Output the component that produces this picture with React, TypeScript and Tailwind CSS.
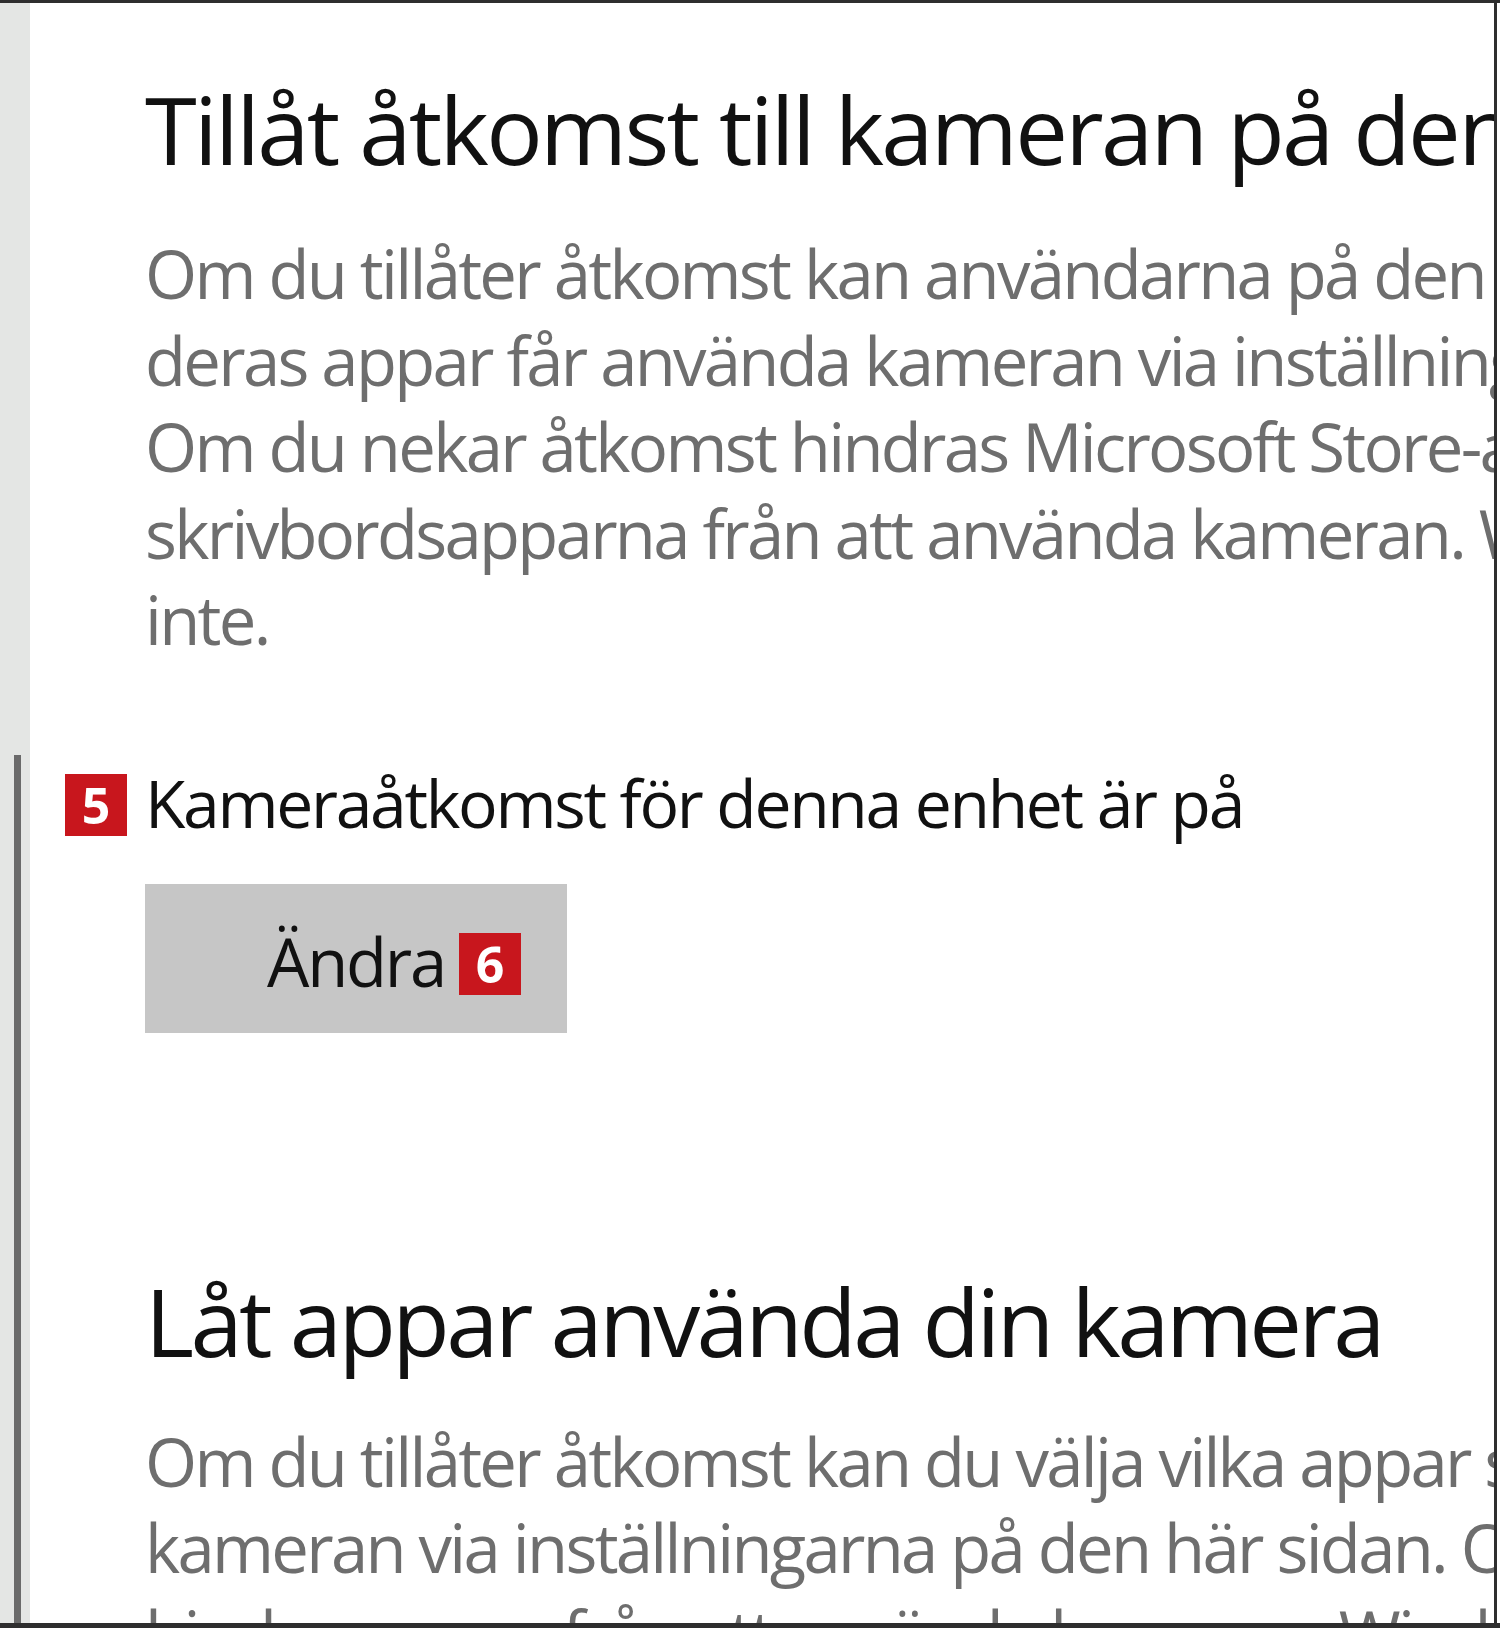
import React from 'react';

const font = { fontFamily: '"Open Sans", "Noto Sans", sans-serif' };

const Badge = ({ n, className }: { n: string; className: string }) => (
  <span
    className={`absolute w-[62px] h-[62px] bg-[#c8161d] text-white text-[50px] font-bold leading-[62px] text-center tracking-normal ${className}`}
  >
    {n}
  </span>
);

const Paragraph = ({ lines, className }: { lines: string[]; className?: string }) => (
  <div className={`text-[67px] leading-[86.5px] tracking-[-2.7px] text-[#6e6e6e] ${className ?? ''}`}>
    {lines.map((line, i) => (
      <div key={i} className="whitespace-nowrap">
        {line}
      </div>
    ))}
  </div>
);

const App = () => {
  return (
    <div
      className="w-[1500px] h-[1628px] bg-white border-t-[3px] border-b-[5px] border-[#2e2e2e] flex overflow-hidden"
      style={font}
    >
      {/* left strip with scrollbar */}
      <div className="w-[30px] shrink-0 bg-[#e4e6e4] pt-[752px] pl-[14px]">
        <div className="w-[7px] h-full bg-[#6a6a6a]" />
      </div>

      <main className="flex-1 min-w-0 border-r-[3px] border-[#2e2e2e] overflow-hidden pl-[115px]">
        <h1 className="mt-[70px] text-[94px] leading-[113px] tracking-[-2.7px] text-[#111] whitespace-nowrap font-normal">
          Tillåt åtkomst till kameran på den här enheten
        </h1>
        <Paragraph
          className="mt-[44px]"
          lines={[
            'Om du tillåter åtkomst kan användarna på den här enheten välja om',
            'deras appar får använda kameran via inställningarna på den här sidan.',
            'Om du nekar åtkomst hindras Microsoft Store-apparna och de flesta',
            'skrivbordsapparna från att använda kameran. Windows Hello påverkas',
            'inte.',
          ]}
        />

        <div className="relative mt-[99px] text-[66px] leading-[80px] tracking-[-2.3px] text-[#111] whitespace-nowrap">
          <Badge n="5" className="left-[-80px] top-[12px]" />
          Kameraåtkomst för denna enhet är på
        </div>

        <button className="mt-[42px] w-[422px] h-[149px] bg-[#c6c6c6] flex items-center justify-center pt-[6px]">
          <span className="relative text-[67px] leading-[80px] tracking-[-2.2px] text-[#111]">
            Ändra
            <Badge n="6" className="left-full ml-[14px] top-[12px]" />
          </span>
        </button>

        <h2 className="mt-[232px] text-[94px] leading-[113px] tracking-[-3.6px] text-[#111] whitespace-nowrap font-normal">
          Låt appar använda din kamera
        </h2>
        <Paragraph
          className="mt-[40px]"
          lines={[
            'Om du tillåter åtkomst kan du välja vilka appar som får använda',
            'kameran via inställningarna på den här sidan. Om du nekar åtkomst',
            'hindras appar från att använda kameran. Windows Hello påverkas inte.',
          ]}
        />
      </main>
      <div className="w-[3px] shrink-0 bg-white" />
    </div>
  );
};

export default App;
